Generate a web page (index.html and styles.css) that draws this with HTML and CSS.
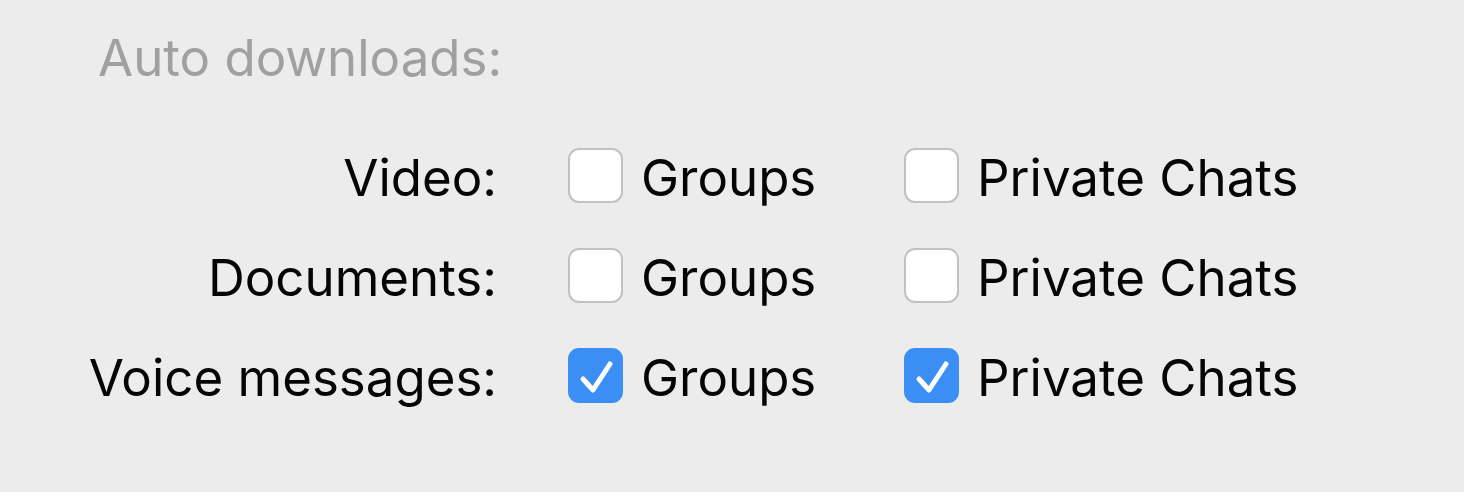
FILE: index.html
```html
<!DOCTYPE html>
<html>
<head>
<meta charset="utf-8">
<link rel="stylesheet" href="styles.css">
</head>
<body>
<div class="pane">
  <div class="heading">Auto downloads:</div>
  <div class="grid">
    <div class="label">Video:</div>
    <label class="opt"><span class="box"></span><span>Groups</span></label>
    <label class="opt"><span class="box"></span><span>Private Chats</span></label>

    <div class="label">Documents:</div>
    <label class="opt"><span class="box"></span><span>Groups</span></label>
    <label class="opt"><span class="box"></span><span>Private Chats</span></label>

    <div class="label">Voice messages:</div>
    <label class="opt"><span class="box checked"><svg viewBox="0 0 56 56" width="56" height="56"><path d="M15 31 L25 42 L42 16" fill="none" stroke="#fff" stroke-width="5" stroke-linecap="round" stroke-linejoin="round"/></svg></span><span>Groups</span></label>
    <label class="opt"><span class="box checked"><svg viewBox="0 0 56 56" width="56" height="56"><path d="M15 31 L25 42 L42 16" fill="none" stroke="#fff" stroke-width="5" stroke-linecap="round" stroke-linejoin="round"/></svg></span><span>Private Chats</span></label>
  </div>
</div>
</body>
</html>
```

FILE: styles.css
```css
html, body {
  margin: 0;
  padding: 0;
  background: #ececec;
}
body {
  width: 1464px;
  height: 492px;
  overflow: hidden;
  font-family: Inter, "Noto Sans", sans-serif;
  font-size: 51px;
  color: #050505;
}
.pane {
  padding-top: 8px;
}
.heading {
  height: 100px;
  line-height: 100px;
  padding-left: 98px;
  color: #a0a0a0;
  margin-bottom: 20px;
}
.grid {
  display: grid;
  grid-template-columns: 497px 265px auto;
  column-gap: 71px;
  grid-auto-rows: 100px;
  line-height: 100px;
}
.label {
  text-align: right;
  white-space: nowrap;
}
.opt {
  display: flex;
  align-items: center;
  gap: 18px;
  white-space: nowrap;
}
.box {
  flex: none;
  box-sizing: border-box;
  width: 55px;
  height: 55px;
  margin-bottom: 5px;
  border-radius: 11px;
  background: #fff;
  border: 2px solid #c2c2c2;
  display: flex;
  align-items: center;
  justify-content: center;
}
.box.checked {
  background: #3b8ff4;
  border-color: #3b8ff4;
}
.box svg {
  display: block;
  flex: none;
}
```
